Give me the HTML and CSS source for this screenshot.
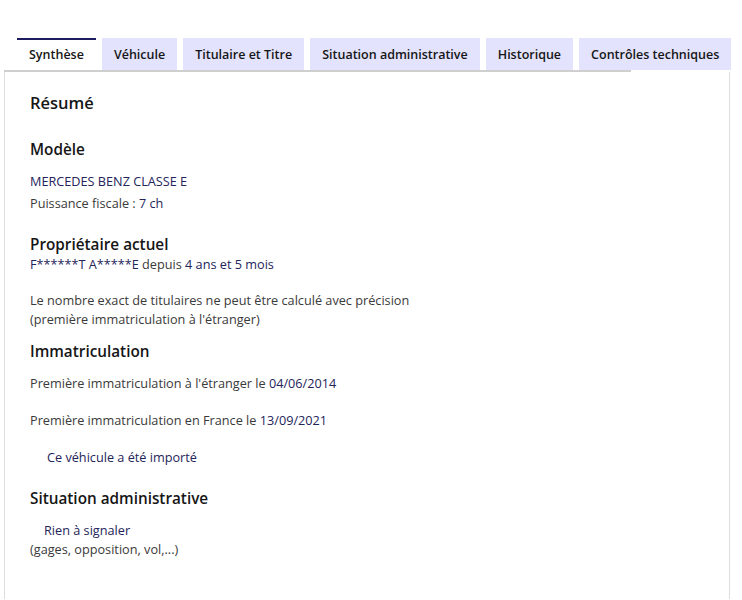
FILE: index.html
```html
<!DOCTYPE html>
<html lang="fr">
<head>
    <meta charset="UTF-8">
    <meta name="viewport" content="width=device-width, initial-scale=1.0">
    <title>Synthèse du véhicule</title>
    <link rel="stylesheet" href="styles.css">
</head>
<body>
    <div class="tabs">
        <ul class="tabs-list">
            <li class="tab active">Synthèse</li>
            <li class="tab">Véhicule</li>
            <li class="tab">Titulaire et Titre</li>
            <li class="tab">Situation administrative</li>
            <li class="tab">Historique</li>
            <li class="tab">Contrôles techniques</li>
        </ul>
        <div class="tabs-line"></div>
        <div class="panel">
            <h2 class="title">Résumé</h2>

            <h3 class="model-title">Modèle</h3>
            <p class="value model">MERCEDES BENZ CLASSE E</p>
            <p class="line">Puissance fiscale : <span class="value">7 ch</span></p>

            <h3 class="owner-title">Propriétaire actuel</h3>
            <p class="line owner"><span class="value">F******T A*****E</span> depuis <span class="value">4 ans et 5 mois</span></p>
            <p class="line note">Le nombre exact de titulaires ne peut être calculé avec précision<br>(première immatriculation à l'étranger)</p>

            <h3 class="reg-title">Immatriculation</h3>
            <p class="line first-reg">Première immatriculation à l'étranger le <span class="value">04/06/2014</span></p>
            <p class="line spaced">Première immatriculation en France le <span class="value">13/09/2021</span></p>
            <p class="line spaced flag value">Ce véhicule a été importé</p>

            <h3 class="admin-title">Situation administrative</h3>
            <p class="line status"><span class="value">Rien à signaler</span><br>(gages, opposition, vol,...)</p>
        </div>
    </div>
</body>
</html>
```

FILE: styles.css
```css
body {
    margin: 0;
    font-family: "Open Sans", "Noto Sans", sans-serif;
    color: #3a3a3a;
    background: #fff;
}
.tabs {
    margin: 38px 12px 0 4px;
}
.tabs-list {
    display: flex;
    gap: 6px;
    list-style: none;
    margin: 0;
    padding: 0 0 0 13px;
}
.tab {
    flex-shrink: 0;
    white-space: nowrap;
    height: 30px;
    line-height: 30px;
    padding: 0 12px;
    background: #e3e3fd;
    color: #161616;
    font-size: 12.5px;
    font-weight: 600;
    border-top: 2px solid transparent;
}
.tab.active {
    background: #fff;
    border-top-color: #1c1c5e;
}
.tabs-line {
    width: 627px;
    height: 2px;
    background: #cfcfcf;
}
.panel {
    border-left: 1px solid #ddd;
    border-right: 1px solid #ddd;
    padding: 19px 25px 40px;
}
h2, h3 {
    margin: 0;
    color: #161616;
    font-weight: 600;
}
.title {
    font-size: 16.5px;
    line-height: 24px;
}
h3 {
    font-size: 15.3px;
    line-height: 22px;
}
.model-title {
    margin-top: 23px;
}
.owner-title {
    margin-top: 20px;
}
.reg-title {
    margin-top: 11px;
}
.admin-title {
    margin-top: 20px;
}
p {
    margin: 0;
    font-size: 12.7px;
    line-height: 19px;
}
.value {
    color: #24245a;
}
.model {
    margin-top: 12px;
}
.line {
    margin-top: 3px;
}
.owner {
    margin-top: 0;
}
.note {
    margin-top: 17px;
}
.first-reg {
    margin-top: 12px;
}
.spaced {
    margin-top: 18px;
}
.flag {
    padding-left: 17px;
}
.status {
    margin-top: 12px;
}
.status .value {
    padding-left: 14px;
}
```
